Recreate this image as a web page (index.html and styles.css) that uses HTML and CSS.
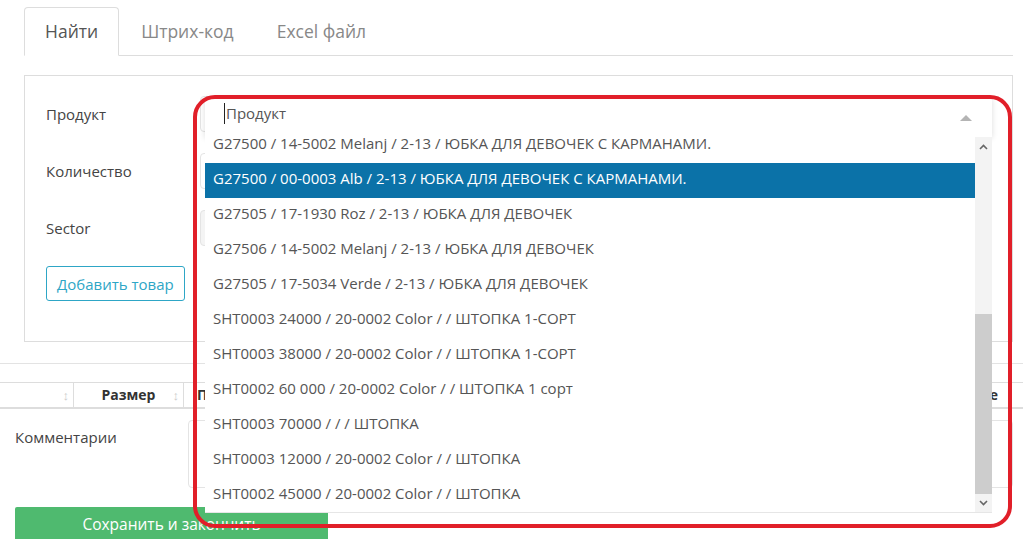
FILE: index.html
```html
<!DOCTYPE html>
<html lang="ru">
<head>
  <meta charset="UTF-8" />
  <meta name="viewport" content="width=device-width, initial-scale=1.0" />
  <title>Заказ</title>
  <link rel="stylesheet" href="styles.css">
</head>
<body>
<div class="page">

  <!-- Tabs + search panel -->
  <div class="top">
    <ul class="tabs">
      <li class="tab active">Найти</li>
      <li class="tab">Штрих-код</li>
      <li class="tab">Excel файл</li>
    </ul>

    <div class="panel">
      <div class="row">
        <label>Продукт</label>
        <div class="field"><div class="input"></div></div>
      </div>
      <div class="row">
        <label>Количество</label>
        <div class="field"><div class="input"></div></div>
      </div>
      <div class="row row-last">
        <label>Sector</label>
        <div class="field"><div class="input input-gray"></div></div>
      </div>
      <button class="add-btn">Добавить товар</button>
    </div>
  </div>

  <div class="divider"></div>

  <!-- Items table header -->
  <div class="thead">
    <div class="th th-first"><span class="sort">&#8597;</span></div>
    <div class="th th-size">Размер <span class="sort">&#8597;</span></div>
    <div class="th th-grow">П</div>
    <div class="th th-last">Действие</div>
  </div>

  <!-- Comments -->
  <div class="comment-row">
    <label>Комментарии</label>
    <div class="textarea"></div>
  </div>

  <button class="save-btn">Сохранить и закончить</button>

  <!-- Open select dropdown -->
  <div class="dropdown">
    <div class="search">
      <span class="caret"></span>Продукт
      <span class="arrow"></span>
    </div>
    <div class="results">
      <ul class="options">
        <li>G27500 / 14-5002 Melanj / 2-13 / ЮБКА ДЛЯ ДЕВОЧЕК С КАРМАНАМИ.</li>
        <li class="hl">G27500 / 00-0003 Alb / 2-13 / ЮБКА ДЛЯ ДЕВОЧЕК С КАРМАНАМИ.</li>
        <li>G27505 / 17-1930 Roz / 2-13 / ЮБКА ДЛЯ ДЕВОЧЕК</li>
        <li>G27506 / 14-5002 Melanj / 2-13 / ЮБКА ДЛЯ ДЕВОЧЕК</li>
        <li>G27505 / 17-5034 Verde / 2-13 / ЮБКА ДЛЯ ДЕВОЧЕК</li>
        <li>SHT0003 24000 / 20-0002 Color / / ШТОПКА 1-СОРТ</li>
        <li>SHT0003 38000 / 20-0002 Color / / ШТОПКА 1-СОРТ</li>
        <li>SHT0002 60 000 / 20-0002 Color / / ШТОПКА 1 сорт</li>
        <li>SHT0003 70000 / / / ШТОПКА</li>
        <li>SHT0003 12000 / 20-0002 Color / / ШТОПКА</li>
        <li>SHT0002 45000 / 20-0002 Color / / ШТОПКА</li>
      </ul>
      <div class="scrollbar">
        <svg class="sb-up" width="9" height="6" viewBox="0 0 9 6"><path d="M1 5 L4.5 1.5 L8 5" fill="none" stroke="#666" stroke-width="1.6"/></svg>
        <div class="thumb"></div>
        <svg class="sb-down" width="9" height="6" viewBox="0 0 9 6"><path d="M1 1 L4.5 4.5 L8 1" fill="none" stroke="#666" stroke-width="1.6"/></svg>
      </div>
    </div>
  </div>

  <!-- Red highlight drawn over the screenshot -->
  <div class="mark"></div>
</div>
</body>
</html>
```

FILE: styles.css
```css
body, html {
  margin: 0;
  padding: 0;
  background-color: #fff;
  color: #444;
  font-family: "Open Sans", "Noto Sans", sans-serif;
  font-size: 14px;
}

.page {
  position: relative;
  width: 1023px;
  height: 539px;
  overflow: hidden;
}

/* Tabs */
.top {
  padding: 7px 10px 0 24px;
}

.tabs {
  list-style: none;
  margin: 0;
  padding: 0;
  display: flex;
  border-bottom: 1px solid #ddd;
}

.tab {
  font-size: 17.5px;
  line-height: 27px;
  padding: 10px 20px;
  margin-right: 1px;
  margin-bottom: -1px;
  border: 1px solid transparent;
  border-radius: 4px 4px 0 0;
  color: #888;
}

.tab.active {
  color: #555;
  background-color: #fff;
  border-color: #ddd;
  border-bottom-color: #fff;
}

/* Search panel */
.panel {
  margin-top: 19px;
  border: 1px solid #ddd;
  padding: 21px 21px 40px 21px;
}

.row {
  display: flex;
  align-items: center;
  height: 34px;
  margin-bottom: 23px;
}

.row-last {
  margin-bottom: 21px;
}

.row label {
  width: 154px;
  font-size: 15px;
  color: #444;
}

.field {
  flex: 1;
}

.input {
  height: 34px;
  border: 1px solid #e4e4e4;
  border-radius: 4px;
}

.input-gray {
  background-color: #f4f4f4;
}

.add-btn {
  font-family: inherit;
  font-size: 15px;
  color: #2ea6c6;
  background-color: #fff;
  border: 1px solid #2ea6c6;
  border-radius: 3px;
  height: 35px;
  padding: 0 10px;
}

/* Divider and table header */
.divider {
  margin-top: 21px;
  border-top: 1px solid #e3e3e3;
}

.thead {
  display: flex;
  margin-top: 18px;
  height: 24px;
  border-top: 1px solid #ddd;
  border-bottom: 2px solid #ddd;
  font-weight: bold;
  font-size: 14px;
  color: #333;
  line-height: 24px;
}

.th {
  position: relative;
  border-right: 1px solid #ddd;
}

.th-first {
  width: 73px;
}

.th-size {
  width: 109px;
  text-align: center;
}

.th-grow {
  flex: 1;
  padding-left: 13px;
  border-right: none;
}

.th-last {
  width: 90px;
  border-right: none;
  border-left: 1px solid #ddd;
  margin-right: 25px;
  text-align: right;
}

.sort {
  position: absolute;
  right: 4px;
  top: 0;
  font-weight: normal;
  color: #ccc;
  font-size: 13px;
}

/* Comments */
.comment-row {
  display: flex;
  padding: 11px 0 0 15px;
}

.comment-row label {
  width: 173px;
  padding-top: 7px;
  font-size: 15px;
}

.textarea {
  flex: 1;
  height: 66px;
  margin-right: 10px;
  border: 1px solid #e4e4e4;
  border-radius: 4px;
}

.save-btn {
  display: block;
  margin: 19px 0 0 15px;
  width: 313px;
  height: 36px;
  padding-bottom: 4px;
  font-family: inherit;
  font-size: 15.5px;
  color: #fff;
  background-color: #4fba6f;
  border: none;
  border-radius: 2px;
}

/* Dropdown (open state) */
.dropdown {
  position: absolute;
  left: 205px;
  top: 98px;
  width: 787px;
  z-index: 5;
}

.search {
  position: relative;
  height: 39px;
  line-height: 31px;
  padding-left: 19px;
  font-size: 15px;
  color: #555;
  background-color: #fff;
  box-shadow: 0 1px 6px rgba(0, 0, 0, 0.14);
}

.caret {
  display: inline-block;
  width: 1px;
  height: 21px;
  background-color: #222;
  vertical-align: -5px;
  margin-right: 1px;
}

.arrow {
  position: absolute;
  right: 20px;
  top: 17px;
  border-left: 6px solid transparent;
  border-right: 6px solid transparent;
  border-bottom: 6px solid #b4b4b4;
}

.results {
  position: relative;
  height: 375px;
  overflow: hidden;
  background-color: #fff;
  border-bottom: 1px solid #e6e6e6;
}

.options {
  list-style: none;
  margin: -9px 17px 0 0;
  padding: 0;
}

.options li {
  height: 35px;
  line-height: 31px;
  padding-left: 8px;
  font-size: 15px;
  color: #555;
  white-space: nowrap;
}

.options li.hl {
  background-color: #0b72a8;
  color: #fff;
}

.scrollbar {
  position: absolute;
  right: 0;
  top: 0;
  bottom: 0;
  width: 17px;
  background-color: #f3f3f3;
}

.thumb {
  position: absolute;
  left: 0;
  right: 0;
  top: 177px;
  height: 180px;
  background-color: #cdcdcd;
}

.sb-up {
  position: absolute;
  left: 4px;
  top: 7px;
}

.sb-down {
  position: absolute;
  left: 4px;
  bottom: 6px;
}

/* Red annotation */
.mark {
  position: absolute;
  left: 193px;
  top: 95px;
  width: 819px;
  height: 433px;
  box-sizing: border-box;
  border: 4px solid #e11f29;
  border-radius: 22px;
  z-index: 10;
}
```
